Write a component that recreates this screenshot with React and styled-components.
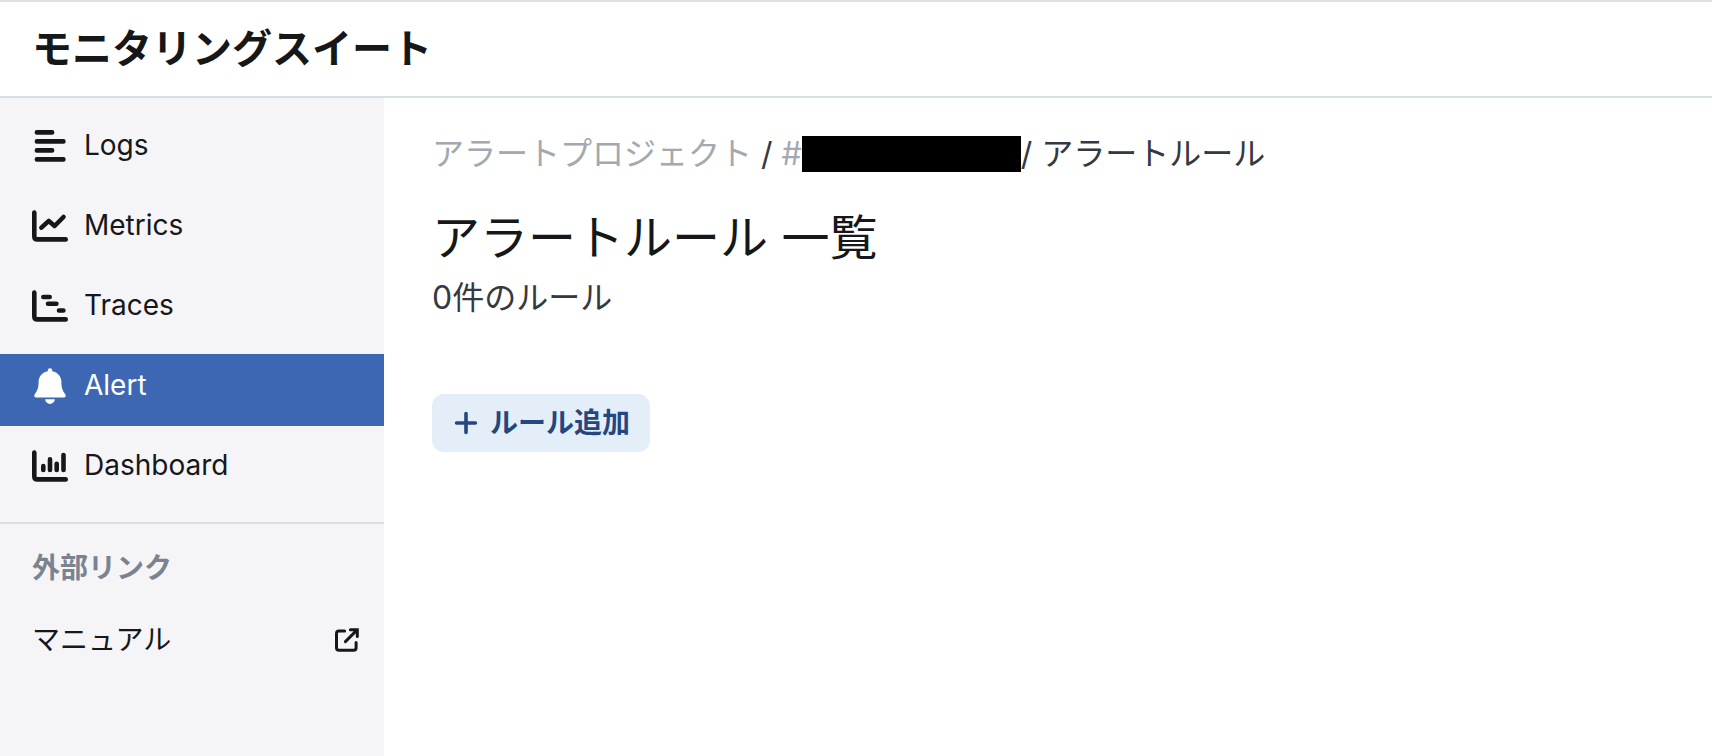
import React from 'react'
import styled, { createGlobalStyle } from 'styled-components'

const color = {
    text: '#151719',
    subText: '#343a40',
    muted: '#a2a9b0',
    heading: '#7a838f',
    border: '#d9dfe6',
    sidebar: '#f5f5f8',
    active: '#3e67b3',
    buttonBg: '#e4eef9',
    buttonText: '#24477f'
}

const links = [
    { label: 'Logs', icon: 'logs' },
    { label: 'Metrics', icon: 'metrics' },
    { label: 'Traces', icon: 'traces' },
    { label: 'Alert', icon: 'alert', active: true },
    { label: 'Dashboard', icon: 'dashboard' }
]

const axis = 'M2.3 4.5V28.2Q2.3 31.4 5.5 31.4H33.7'

const NavIcon = ({ name }) => (
    <Svg viewBox='0 0 36 36' $size={36} aria-hidden='true'>
        {name === 'logs' && <path d='M4.9 4.4H20.1M4.9 13.4H31.4M4.9 22.4H20.1M4.9 31.4H31.4' />}
        {name === 'metrics' && <React.Fragment>
            <path d={axis} />
            <path d='M9.4 19.6L16.8 12.9L22.6 18L31.5 9' />
        </React.Fragment>}
        {name === 'traces' && <React.Fragment>
            <path d={axis} />
            <path d='M11.3 9H17.7M16 15.8H24.4M27 22.5H31.4' />
        </React.Fragment>}
        {name === 'dashboard' && <React.Fragment>
            <path d={axis} />
            <path d='M11.3 18V22M18 11.4V22M24.7 15.7V22M31.5 7.1V22' />
        </React.Fragment>}
        {name === 'alert' && <path
            fill='currentColor'
            stroke='none'
            d='M18 0.2C16.8 0.2 15.8 1.1 15.8 2.3V3.2C10.2 4.2 6.6 8.4 6.6 14C6.6 19.4 5.6 22.4 2.8 26.2C1.6 27.8 2.4 29.4 4.2 29.4H31.8C33.6 29.4 34.4 27.8 33.2 26.2C30.4 22.4 29.4 19.4 29.4 14C29.4 8.4 25.8 4.2 20.2 3.2V2.3C20.2 1.1 19.2 0.2 18 0.2ZM13.1 31.3C13.4 34 15.4 36 18 36C20.6 36 22.6 34 22.9 31.3Z'
        />}
    </Svg>
)

const App = () => (
    <React.Fragment>
        <GlobalStyle />
        <Page>
            <Header>モニタリングスイート</Header>
            <Body>
                <Sidebar>
                    <Nav>
                        {links.map(({ label, icon, active }) => (
                            <NavLink key={label} href='#' $active={active} aria-current={active ? 'page' : undefined}>
                                <NavIcon name={icon} />
                                {label}
                            </NavLink>
                        ))}
                    </Nav>
                    <External>
                        <ExternalTitle>外部リンク</ExternalTitle>
                        <ExternalLink href='#'>
                            マニュアル
                            <Svg viewBox='0 0 24 24' $size={24} $stroke={3} aria-hidden='true'>
                                <path d='M9.6 2.9H4Q1.5 2.9 1.5 5.4V19.8Q1.5 22.3 4 22.3H18.6Q21.1 22.3 21.1 19.8V14.6' />
                                <path strokeLinejoin='miter' d='M15.4 1.7H22.3V8.6M10.4 13.6L21.5 2.5' />
                            </Svg>
                        </ExternalLink>
                    </External>
                </Sidebar>
                <Main>
                    <Breadcrumb>
                        <Crumb href='#'>アラートプロジェクト</Crumb>
                        {' / '}
                        <Crumb href='#'>#<Masked /></Crumb>
                        {'/ アラートルール'}
                    </Breadcrumb>
                    <Title>アラートルール 一覧</Title>
                    <Count>0件のルール</Count>
                    <AddButton type='button'>
                        <Svg viewBox='0 0 24 24' $size={24} $stroke={3.6} aria-hidden='true'>
                            <path d='M12 2.6V21.4M2.6 12H21.4' />
                        </Svg>
                        ルール追加
                    </AddButton>
                </Main>
            </Body>
        </Page>
    </React.Fragment>
)

export default App

const GlobalStyle = createGlobalStyle`
    * {
        box-sizing: border-box;
    }
    body {
        margin: 0;
        color: ${color.text};
        background: #fff;
        font-family: Inter, 'Noto Sans CJK JP', sans-serif;
    }
    a {
        color: inherit;
        text-decoration: none;
    }
`

const Svg = styled.svg`
    flex: none;
    width: ${({ $size }) => $size}px;
    height: ${({ $size }) => $size}px;
    fill: none;
    stroke: currentColor;
    stroke-width: ${({ $stroke }) => $stroke || 4.6};
    stroke-linecap: round;
    stroke-linejoin: round;
`

const Page = styled.div`
    display: flex;
    flex-direction: column;
    min-height: 100vh;
    border-top: 2px solid #e0e0e0;
`

const Header = styled.header`
    padding: 17px 32px;
    border-bottom: 2px solid ${color.border};
    font-size: 40px;
    font-weight: 700;
    line-height: 60px;
`

const Body = styled.div`
    display: flex;
    flex: 1;
`

const Sidebar = styled.aside`
    flex: none;
    width: 384px;
    background: ${color.sidebar};
    font-size: 28px;
    line-height: 36px;
`

const Nav = styled.nav`
    display: flex;
    flex-direction: column;
    gap: 8px;
    padding: 16px 0;
    line-height: 34px;
`

const NavLink = styled.a`
    display: flex;
    align-items: flex-start;
    gap: 16px;
    padding: 14px 32px 22px;
    ${({ $active }) => $active && `
        color: #fff;
        background: ${color.active};
    `}
`

const External = styled.div`
    padding: 26px 25px 24px 32px;
    border-top: 2px solid ${color.border};
`

const ExternalTitle = styled.h2`
    margin: 0 0 36px;
    color: ${color.heading};
    font-size: 28px;
    font-weight: 700;
`

const ExternalLink = styled.a`
    display: flex;
    align-items: center;
    justify-content: space-between;
`

const Main = styled.main`
    flex: 1;
    padding: 32px 48px;
`

const Breadcrumb = styled.nav`
    display: flex;
    align-items: center;
    color: ${color.subText};
    font-size: 32px;
    line-height: 48px;
    white-space: pre;
`

const Crumb = styled.a`
    display: flex;
    align-items: center;
    color: ${color.muted};
`

const Masked = styled.span`
    width: 219px;
    height: 36px;
    background: #000;
`

const Title = styled.h1`
    margin: 24px 0 0;
    font-size: 48px;
    font-weight: 400;
    line-height: 72px;
`

const Count = styled.p`
    margin: 0 0 72px;
    color: ${color.subText};
    font-size: 32px;
    line-height: 48px;
`

const AddButton = styled.button`
    display: flex;
    align-items: center;
    gap: 12px;
    padding: 8px 20px 8px 22px;
    border: 0;
    border-radius: 12px;
    color: ${color.buttonText};
    background: ${color.buttonBg};
    font: inherit;
    font-size: 28px;
    font-weight: 700;
    line-height: 42px;
    cursor: pointer;
`
